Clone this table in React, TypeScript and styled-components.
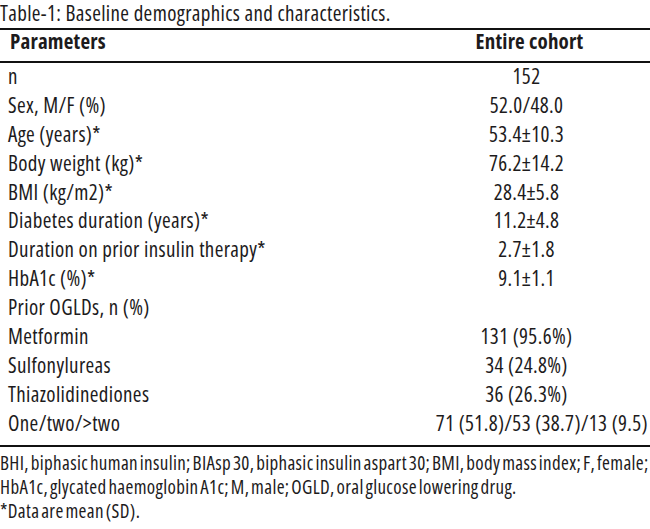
import React from 'react';
import styled, { createGlobalStyle } from 'styled-components';

const GlobalStyle = createGlobalStyle`
  html, body {
    margin: 0;
    padding: 0;
    background: #ffffff;
  }
  body {
    font-family: 'Open Sans', 'Noto Sans', sans-serif;
    font-stretch: 75%;
    color: #1d1b1c;
  }
`;

const rows: { label: string; value: string; wide?: boolean }[] = [
  { label: 'n', value: '152' },
  { label: 'Sex, M/F (%)', value: '52.0/48.0' },
  { label: 'Age (years)*', value: '53.4±10.3' },
  { label: 'Body weight (kg)*', value: '76.2±14.2' },
  { label: 'BMI (kg/m2)*', value: '28.4±5.8' },
  { label: 'Diabetes duration (years)*', value: '11.2±4.8' },
  { label: 'Duration on prior insulin therapy*', value: '2.7±1.8' },
  { label: 'HbA1c (%)*', value: '9.1±1.1' },
  { label: 'Prior OGLDs, n (%)', value: '' },
  { label: 'Metformin', value: '131 (95.6%)' },
  { label: 'Sulfonylureas', value: '34 (24.8%)' },
  { label: 'Thiazolidinediones', value: '36 (26.3%)' },
  { label: 'One/two/>two', value: '71 (51.8)/53 (38.7)/13 (9.5)', wide: true },
];

const Page = styled.div`
  width: 650px;
  height: 529px;
  overflow: hidden;
  font-size: 21px;
  letter-spacing: 0.35px;
`;

const Caption = styled.div`
  line-height: 26px;
  height: 28px;
  white-space: nowrap;
`;

const Table = styled.div`
  border-top: 2px solid #111;
  border-bottom: 2px solid #111;
  padding-bottom: 6px;
`;

const HeadRow = styled.div`
  display: grid;
  grid-template-columns: 400px 250px;
  height: 31px;
  line-height: 23px;
  border-bottom: 2px solid #111;
  font-weight: bold;
  letter-spacing: 0.2px;
`;

const Row = styled.div`
  display: grid;
  grid-template-columns: 400px 250px;
  height: 28.9px;
  line-height: 27.7px;
  white-space: nowrap;
`;

const Label = styled.div`
  padding-left: 8px;
`;

const HeadLabel = styled.div`
  padding-left: 10px;
`;

const HeadValue = styled.div`
  text-align: center;
  padding-left: 9px;
`;

const Value = styled.div<{ $wide?: boolean }>`
  text-align: ${({ $wide }) => ($wide ? 'right' : 'center')};
  padding-right: ${({ $wide }) => ($wide ? '2px' : '0')};
  padding-left: ${({ $wide }) => ($wide ? '0' : '3px')};
`;

const Notes = styled.div`
  margin-top: 4px;
  font-size: 19px;
  line-height: 24px;
  letter-spacing: 0.35px;
  word-spacing: -2px;
  white-space: nowrap;
`;

const App = () => (
  <Page>
    <GlobalStyle />
    <Caption>Table-1: Baseline demographics and characteristics.</Caption>
    <Table>
      <HeadRow>
        <HeadLabel>Parameters</HeadLabel>
        <HeadValue>Entire cohort</HeadValue>
      </HeadRow>
      {rows.map((r) => (
        <Row key={r.label}>
          <Label>{r.label}</Label>
          <Value $wide={r.wide}>{r.value}</Value>
        </Row>
      ))}
    </Table>
    <Notes>
      <div>BHI, biphasic human insulin; BIAsp 30, biphasic insulin aspart 30; BMI, body mass index; F, female;</div>
      <div>HbA1c, glycated haemoglobin A1c; M, male; OGLD, oral glucose lowering drug.</div>
      <div>*Data are mean (SD).</div>
    </Notes>
  </Page>
);

export default App;
